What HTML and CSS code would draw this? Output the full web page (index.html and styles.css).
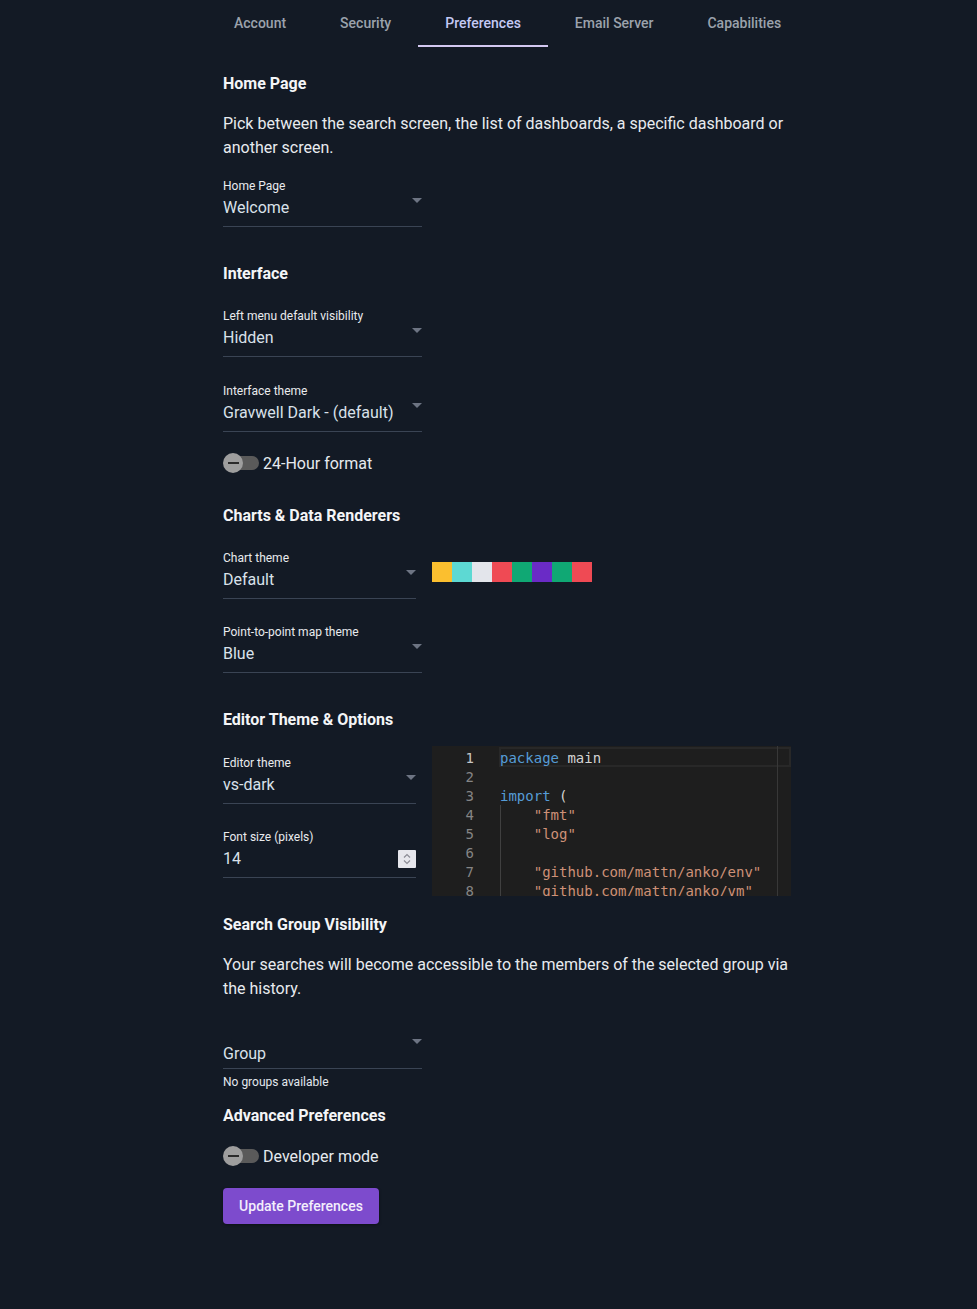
FILE: index.html
```html
<!DOCTYPE html>
<html lang="en">
<head>
<meta charset="utf-8">
<title>Preferences</title>
<link rel="stylesheet" href="styles.css">
</head>
<body>
<div class="page">
  <nav class="tabs">
    <div class="tab">Account</div>
    <div class="tab">Security</div>
    <div class="tab active">Preferences</div>
    <div class="tab">Email Server</div>
    <div class="tab">Capabilities</div>
  </nav>

  <h2 class="heading h-first">Home Page</h2>
  <p class="text">Pick between the search screen, the list of dashboards, a specific dashboard or another screen.</p>
  <div class="field f-after-text">
    <div class="label">Home Page</div>
    <div class="value">Welcome<span class="arrow"></span></div>
  </div>

  <h2 class="heading h-after-field">Interface</h2>
  <div class="field f-after-heading">
    <div class="label">Left menu default visibility</div>
    <div class="value">Hidden<span class="arrow"></span></div>
  </div>
  <div class="field f-after-field-lg">
    <div class="label">Interface theme</div>
    <div class="value">Gravwell Dark - (default)<span class="arrow"></span></div>
  </div>
  <div class="toggle t-after-field">
    <span class="switch"><span class="track"></span><span class="thumb"><span class="minus"></span></span></span>
    <span class="toggle-text">24-Hour format</span>
  </div>

  <h2 class="heading h-after-toggle">Charts &amp; Data Renderers</h2>
  <div class="row r-chart">
    <div class="field narrow">
      <div class="label">Chart theme</div>
      <div class="value">Default<span class="arrow"></span></div>
    </div>
    <div class="swatches">
      <span class="sw" style="background:#fbbf2f"></span>
      <span class="sw" style="background:#5dd9d3"></span>
      <span class="sw" style="background:#e3e5eb"></span>
      <span class="sw" style="background:#ef4a54"></span>
      <span class="sw" style="background:#10a874"></span>
      <span class="sw" style="background:#6a2bc6"></span>
      <span class="sw" style="background:#10a874"></span>
      <span class="sw" style="background:#ef4a54"></span>
    </div>
  </div>
  <div class="field f-after-field">
    <div class="label">Point-to-point map theme</div>
    <div class="value">Blue<span class="arrow"></span></div>
  </div>

  <h2 class="heading h-after-field">Editor Theme &amp; Options</h2>
  <div class="row r-editor">
    <div class="col-fields">
      <div class="field narrow">
        <div class="label">Editor theme</div>
        <div class="value">vs-dark<span class="arrow"></span></div>
      </div>
      <div class="field narrow f-after-field">
        <div class="label">Font size (pixels)</div>
        <div class="value">14
          <span class="spinner">
            <svg width="18" height="18" viewBox="0 0 18 18"><path d="M6 7.5 L9 4.5 L12 7.5" fill="none" stroke="#8b8b95" stroke-width="1.2"/><path d="M6 10.5 L9 13.5 L12 10.5" fill="none" stroke="#8b8b95" stroke-width="1.2"/></svg>
          </span>
        </div>
      </div>
    </div>
    <div class="editor">
      <div class="gutter">
        <div class="ln cur">1</div>
        <div class="ln">2</div>
        <div class="ln">3</div>
        <div class="ln">4</div>
        <div class="ln">5</div>
        <div class="ln">6</div>
        <div class="ln">7</div>
        <div class="ln">8</div>
      </div>
      <div class="code">
        <div class="curline"></div>
        <div class="guide"></div>
        <div class="cl"><span class="kw">package</span> main</div>
        <div class="cl"> </div>
        <div class="cl"><span class="kw">import</span> (</div>
        <div class="cl">    <span class="str">"fmt"</span></div>
        <div class="cl">    <span class="str">"log"</span></div>
        <div class="cl"> </div>
        <div class="cl">    <span class="str">"github.com/mattn/anko/env"</span></div>
        <div class="cl">    <span class="str">"github.com/mattn/anko/vm"</span></div>
      </div>
      <div class="ruler"></div>
    </div>
  </div>

  <h2 class="heading h-after-editor">Search Group Visibility</h2>
  <p class="text">Your searches will become accessible to the members of the selected group via the history.</p>
  <div class="field group">
    <div class="label"></div>
    <div class="value">Group<span class="arrow"></span></div>
  </div>
  <div class="helper">No groups available</div>

  <h2 class="heading h-after-helper">Advanced Preferences</h2>
  <div class="toggle t-after-heading">
    <span class="switch"><span class="track"></span><span class="thumb"><span class="minus"></span></span></span>
    <span class="toggle-text">Developer mode</span>
  </div>
  <button class="btn">Update Preferences</button>
</div>
</body>
</html>
```

FILE: styles.css
```css
* { box-sizing: border-box; }
html, body { margin: 0; padding: 0; background: #131a25; }
body {
  font-family: Roboto, "Liberation Sans", sans-serif;
  color: #eceef2;
  min-height: 1309px;
}
.page { width: 567px; margin-left: 223px; display: flex; flex-direction: column; align-items: flex-start; }

.tabs { display: flex; margin-left: -16px; height: 47px; flex-wrap: nowrap; }
.tab {
  flex-shrink: 0;
  white-space: nowrap;
  padding: 0 27px;
  font-size: 14px;
  font-weight: 500;
  color: #9ba2ac;
  line-height: 46px;
  height: 47px;
  border-bottom: 2px solid transparent;
}
.tab.active { color: #c4c9f4; border-bottom-color: #d3c8f1; }

.heading { margin: 0; font-size: 16px; font-weight: 700; line-height: 24px; color: #f4f5f7; }
.h-first { margin-top: 25px; }
.h-after-field { margin-top: 35px; }
.h-after-toggle { margin-top: 29px; }
.h-after-editor { margin-top: 17px; }
.h-after-helper { margin-top: 15px; }

.text { margin: 16px 0 0; font-size: 16px; line-height: 24px; color: #e8ebef; }

.field { width: 199px; }
.field.narrow { width: 193px; }
.f-after-text { margin-top: 19px; }
.f-after-heading { margin-top: 23px; }
.f-after-field { margin-top: 26px; }
.f-after-field-lg { margin-top: 27px; }
.label { font-size: 12px; line-height: 14px; height: 14px; color: #e9ebee; }
.value {
  position: relative;
  font-size: 16px;
  line-height: 20px;
  padding: 5px 0 8px;
  color: #d9e1ea;
  border-bottom: 1px solid #3a4454;
}
.arrow {
  position: absolute;
  right: 0;
  top: 5px;
  width: 0; height: 0;
  border-left: 5px solid transparent;
  border-right: 5px solid transparent;
  border-top: 5px solid #6d7483;
}

.toggle { display: flex; align-items: center; height: 24px; }
.t-after-field { margin-top: 19px; }
.t-after-heading { margin-top: 16px; }
.switch { position: relative; width: 36px; height: 20px; margin-right: 4px; flex-shrink: 0; }
.track { position: absolute; left: 2px; top: 3px; width: 34px; height: 14px; border-radius: 7px; background: #5a5a5a; }
.thumb {
  position: absolute; left: 0; top: 0;
  width: 20px; height: 20px; border-radius: 50%;
  background: #9e9e9e;
  display: flex; align-items: center; justify-content: center;
}
.minus { width: 11px; height: 2px; background: #2b2b2b; }
.toggle-text { font-size: 16px; color: #e6eaef; line-height: 20px; padding-top: 2px; }

.row { display: flex; align-items: flex-start; }
.r-chart { margin-top: 23px; }
.swatches { display: flex; margin-left: 16px; margin-top: 11px; }
.sw { width: 20px; height: 20px; display: block; }

.r-editor { margin-top: 14px; }
.col-fields { padding-top: 10px; width: 193px; }
.spinner {
  position: absolute; right: 0; top: 6px;
  width: 18px; height: 18px;
  background: #e6e6ec;
  border-radius: 1px;
  display: block;
}
.spinner svg { display: block; }

.editor {
  position: relative;
  margin-left: 16px;
  width: 359px;
  height: 150px;
  background: #1e1e1e;
  display: flex;
  overflow: hidden;
  font-family: "DejaVu Sans Mono", "Liberation Mono", monospace;
  font-size: 14px;
}
.gutter { width: 68px; padding: 3px 26px 0 0; text-align: right; }
.ln { height: 19px; line-height: 19px; color: #858585; }
.ln.cur { color: #c6c6c6; }
.code { position: relative; flex: 1; padding-top: 3px; }
.cl { height: 19px; line-height: 19px; white-space: pre; color: #d4d4d4; position: relative; }
.kw { color: #569cd6; }
.str { color: #ce9178; }
.curline { position: absolute; left: -1px; right: 0; top: 1px; height: 20px; border: 2px solid #282828; }
.guide { position: absolute; left: 0; top: 59px; bottom: 0; width: 1px; background: #404040; }
.ruler { position: absolute; left: 345px; top: 0; bottom: 0; width: 1px; background: #383838; }

.group { margin-top: 24px; }
.group .value { padding: 5px 0 4px; }
.group .arrow { top: 0; }
.helper { margin-top: 6px; font-size: 12px; line-height: 14px; color: #e3e8ee; }

.btn {
  margin-top: 20px;
  width: 156px;
  height: 36px;
  border: 0;
  border-radius: 4px;
  background: #7d4bcd;
  color: #f3eefc;
  font-family: Roboto, "Liberation Sans", sans-serif;
  font-size: 14px;
  font-weight: 500;
  padding: 0;
  box-shadow: 0 1px 3px rgba(0,0,0,0.4);
}
```
